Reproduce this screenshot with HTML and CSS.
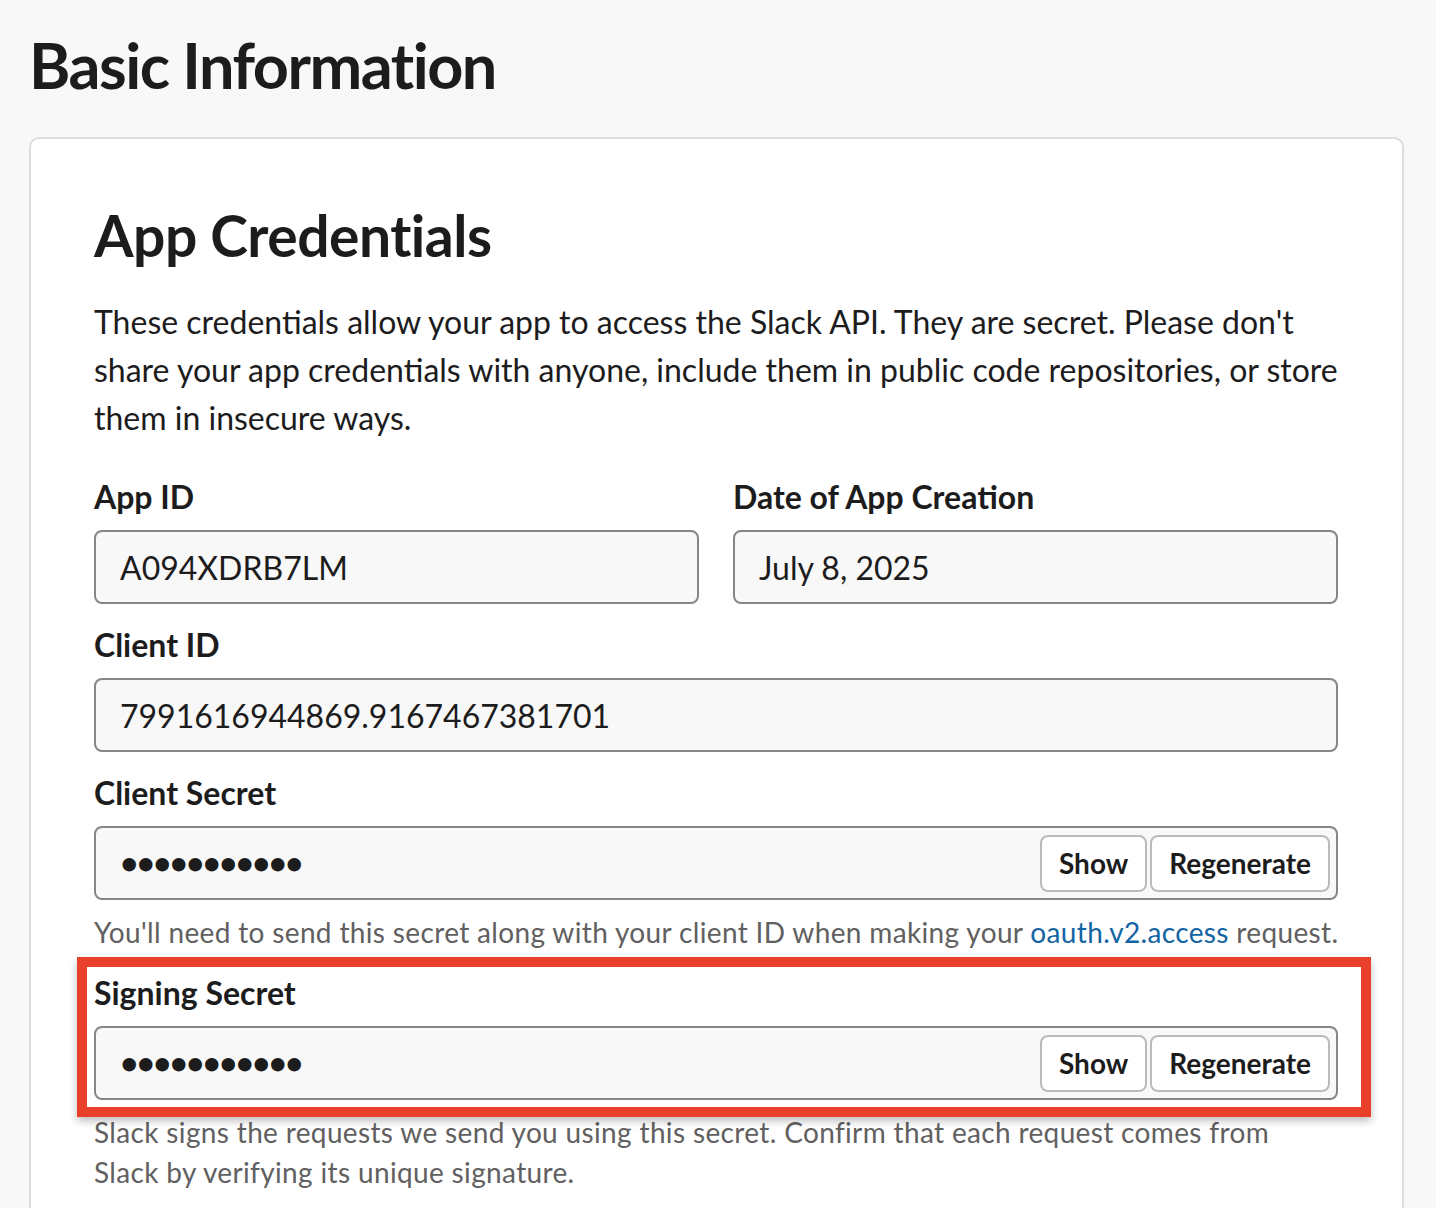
FILE: index.html
```html
<!DOCTYPE html>
<html>
<head>
<meta charset="utf-8">
<link rel="stylesheet" href="styles.css">
</head>
<body>
<main class="page">
  <h1 class="page-title">Basic Information</h1>
  <section class="card">
    <h2 class="card-title">App Credentials</h2>
    <p class="intro">These credentials allow your app to access the Slack API. They are secret. Please don't share your app credentials with anyone, include them in public code repositories, or store them in insecure ways.</p>

    <div class="row">
      <div class="field">
        <label class="label">App ID</label>
        <div class="input"><span class="value">A094XDRB7LM</span></div>
      </div>
      <div class="field">
        <label class="label">Date of App Creation</label>
        <div class="input"><span class="value">July 8, 2025</span></div>
      </div>
    </div>

    <div class="field">
      <label class="label">Client ID</label>
      <div class="input"><span class="value">7991616944869.9167467381701</span></div>
    </div>

    <div class="field">
      <label class="label">Client Secret</label>
      <div class="input secret">
        <span class="value dots">●●●●●●●●●●●</span>
        <div class="btns">
          <button class="btn">Show</button>
          <button class="btn">Regenerate</button>
        </div>
      </div>
      <p class="help help-one">You'll need to send this secret along with your client ID when making your <a class="link">oauth.v2.access</a> request.</p>
    </div>

    <div class="field signing">
      <div class="highlight"></div>
      <label class="label">Signing Secret</label>
      <div class="input secret">
        <span class="value dots">●●●●●●●●●●●</span>
        <div class="btns">
          <button class="btn">Show</button>
          <button class="btn">Regenerate</button>
        </div>
      </div>
      <p class="help help-two">Slack signs the requests we send you using this secret. Confirm that each request comes from Slack by verifying its unique signature.</p>
    </div>
  </section>
</main>
</body>
</html>
```
FILE: styles.css
```css
* { box-sizing: border-box; }
html, body {
  margin: 0;
  padding: 0;
  background: #f8f8f8;
  font-family: Lato, "Noto Sans", sans-serif;
  color: #1d1c1d;
  overflow: hidden;
  height: 1208px;
}
.page {
  padding: 19px 32px 0 29px;
}
.page-title {
  margin: 0;
  font-size: 63px;
  line-height: 92px;
  font-weight: 700;
  letter-spacing: -1.5px;
}
.card {
  margin-top: 26px;
  background: #fff;
  border: 2px solid #dddddd;
  border-radius: 10px;
  padding: 54px 64px 80px 63px;
  width: 1375px;
}
.card-title {
  margin: 0;
  font-size: 57px;
  line-height: 84px;
  font-weight: 700;
  letter-spacing: -0.5px;
}
.intro {
  margin: 21px 0 33px;
  font-size: 32px;
  line-height: 48px;
}
.row {
  display: flex;
  gap: 34px;
}
.row .field { flex: 1; }
.field { margin-bottom: 19px; position: relative; }
.label {
  display: block;
  font-size: 32px;
  line-height: 44px;
  font-weight: 700;
  margin-bottom: 11px;
}
.input {
  height: 74px;
  border: 2px solid #868686;
  border-radius: 8px;
  background: #f8f8f8;
  display: flex;
  align-items: center;
  padding: 0 6px 0 24px;
}
.value {
  font-size: 32px;
  flex: 1;
}
.dots {
  font-size: 27.5px;
  letter-spacing: 0;
  line-height: 1;
  padding-left: 1px;
}
.btns { display: flex; gap: 3px; }
.btn {
  height: 57px;
  background: #fff;
  border: 2px solid #bbbbbb;
  border-radius: 8px;
  font-family: Lato, "Noto Sans", sans-serif;
  font-weight: 700;
  font-size: 28px;
  color: #1d1c1d;
  padding: 0 17px;
}
.help {
  margin: 12px 0 0;
  font-size: 28px;
  line-height: 40px;
  letter-spacing: 0.35px;
  color: #616061;
}
.help-one { white-space: nowrap; }
.help-two { max-width: 1190px; }
.link { color: #1264a3; }
.highlight {
  position: absolute;
  left: -17px;
  top: -14px;
  width: 1294px;
  height: 160px;
  border: 10px solid #e8402a;
  box-shadow: 0 4px 8px rgba(0,0,0,0.25);
  pointer-events: none;
}
```
